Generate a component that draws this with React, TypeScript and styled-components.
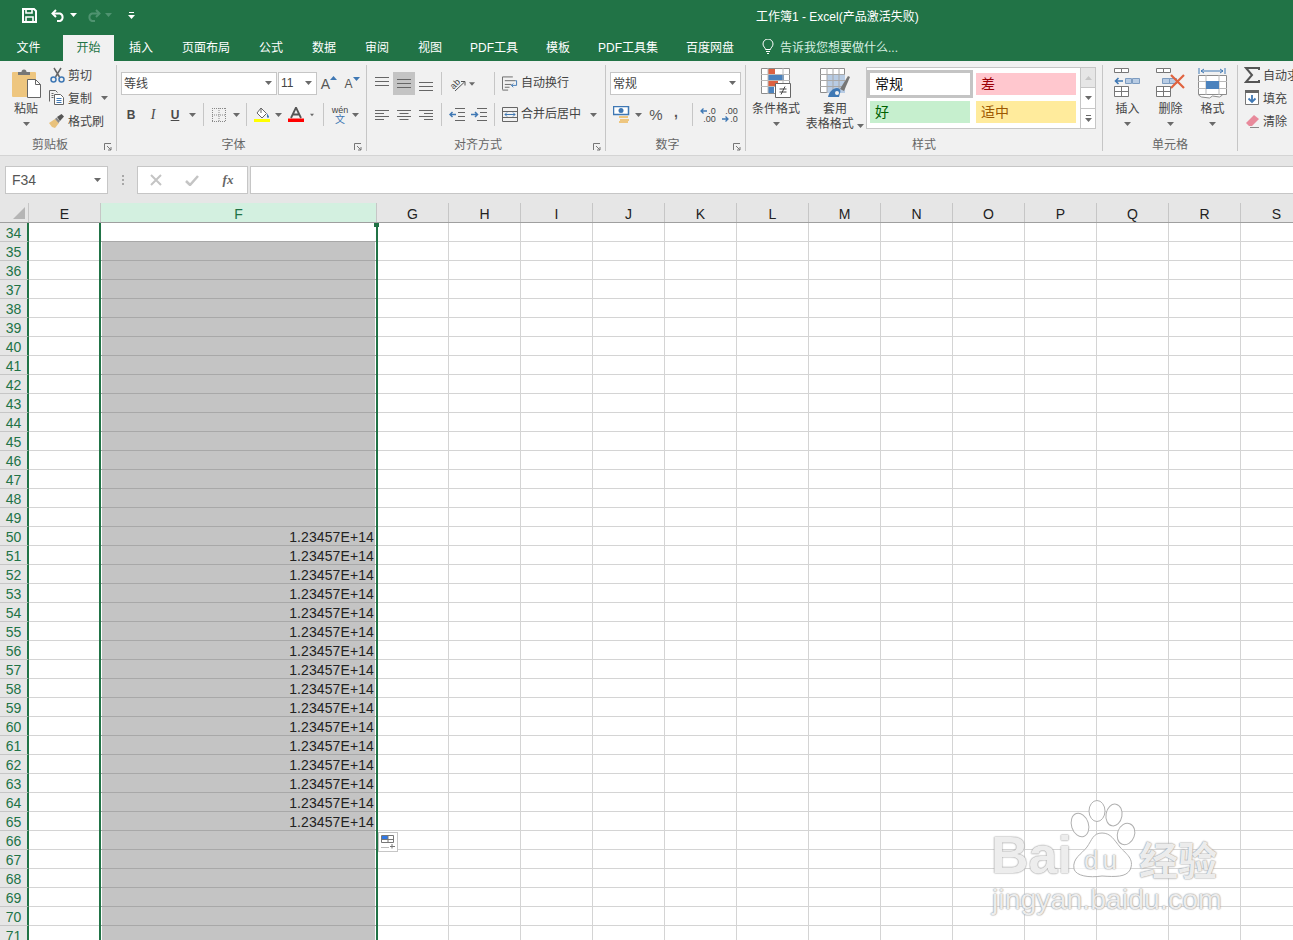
import React from "react";
import styled, { createGlobalStyle } from "styled-components";

const CJK = `"Liberation Sans", "Noto Sans CJK SC", sans-serif`;

const Global = createGlobalStyle`
  html, body { margin: 0; padding: 0; height: 940px; overflow: hidden; background: #fff; }
  body { font-family: ${CJK}; font-size: 12px; color: #444; }
  #root { width: 1293px; height: 940px; overflow: hidden; }
`;

const Page = styled.div`
  width: 1293px;
  height: 940px;
  display: flex;
  flex-direction: column;
  overflow: hidden;
`;

/* ---------- title bar and tabs ---------- */
const TitleBar = styled.div`
  height: 34px;
  flex: none;
  box-sizing: border-box;
  padding-bottom: 4px;
  display: flex;
  align-items: center;
  background: #217346;
  color: #fff;
`;

const Qat = styled.div`
  width: 756px;
  flex: none;
  display: flex;
  align-items: center;
  padding-left: 22px;
  box-sizing: border-box;
`;

const Slot = styled.div<{ $w: number }>`
  width: ${(p) => p.$w}px;
  flex: none;
  display: flex;
  align-items: center;
  justify-content: center;
`;

const Title = styled.div`
  font-size: 12px;
  white-space: nowrap;
`;

const Tabs = styled.div`
  height: 27px;
  flex: none;
  display: flex;
  align-items: flex-end;
  background: #217346;
  padding-left: 2px;
`;

const Tab = styled.div<{ $active?: boolean; $w: number }>`
  width: ${(p) => p.$w}px;
  height: 26px;
  flex: none;
  box-sizing: border-box;
  padding-bottom: 4px;
  display: flex;
  align-items: center;
  justify-content: center;
  font-size: 12px;
  white-space: nowrap;
  color: ${(p) => (p.$active ? "#217346" : "#fff")};
  background: ${(p) => (p.$active ? "#f1f1f1" : "transparent")};
`;

const TellMe = styled.div`
  display: flex;
  align-items: center;
  gap: 6px;
  height: 26px;
  box-sizing: border-box;
  padding-bottom: 4px;
  margin-left: 14px;
  color: #d8efe2;
  font-size: 12px;
  white-space: nowrap;
`;

/* ---------- ribbon ---------- */
const Ribbon = styled.div`
  height: 95px;
  flex: none;
  display: flex;
  box-sizing: border-box;
  background: #f1f1f1;
  border-bottom: 1px solid #d4d4d4;
  overflow: hidden;
`;

const Group = styled.div<{ $w: number; $last?: boolean }>`
  width: ${(p) => p.$w}px;
  flex: none;
  height: 86px;
  margin-top: 4px;
  box-sizing: border-box;
  display: flex;
  flex-direction: column;
  border-right: ${(p) => (p.$last ? "none" : "1px solid #c6c6c6")};
`;

const GroupBody = styled.div<{ $pl?: number }>`
  height: 70px;
  flex: none;
  display: flex;
  padding-left: ${(p) => p.$pl ?? 0}px;
  white-space: nowrap;
`;

const GroupFoot = styled.div`
  height: 16px;
  display: flex;
  align-items: center;
  color: #666;
  font-size: 12px;
`;

const GroupName = styled.div`
  flex: 1;
  text-align: center;
`;

const LauncherBox = styled.div`
  width: 16px;
  flex: none;
  display: flex;
  justify-content: center;
  align-self: flex-end;
`;

const SmallCol = styled.div<{ $ml?: number }>`
  display: flex;
  flex-direction: column;
  margin-top: -2px;
  margin-left: ${(p) => p.$ml ?? 0}px;
`;

const SmallBtn = styled.div`
  height: 23px;
  display: flex;
  align-items: center;
  gap: 3px;
  color: #444;
  font-size: 12px;
`;

const Stack = styled.div`
  display: flex;
  flex-direction: column;
  padding-top: 7px;
  gap: 8px;
  ${SmallBtn} {
    line-height: 21px;
    height: 23px;
  }
`;

const Row = styled.div`
  height: 23px;
  display: flex;
  align-items: center;
`;

const IconBox = styled.div`
  width: 16px;
  height: 16px;
  flex: none;
  display: flex;
  align-items: center;
  justify-content: center;
`;

const Large = styled.div<{ $w: number }>`
  width: ${(p) => p.$w}px;
  flex: none;
  display: flex;
  flex-direction: column;
  align-items: center;
  padding-top: 3px;
  font-size: 12px;
  line-height: 15px;
  color: #444;
`;

const LargeIcon = styled.div`
  height: 30px;
  margin-bottom: 4px;
  display: flex;
  align-items: flex-start;
`;

const LargeCaret = styled.div`
  height: 13px;
  display: flex;
  align-items: center;
`;

const Combo = styled.div<{ $w: number }>`
  width: ${(p) => p.$w}px;
  height: 23px;
  flex: none;
  box-sizing: border-box;
  display: flex;
  align-items: center;
  justify-content: space-between;
  padding: 0 4px 2px 2px;
  background: #fff;
  border: 1px solid #c6c6c6;
  font-size: 12px;
  color: #444;
`;

const Sep = styled.div`
  width: 1px;
  height: 23px;
  background: #c6c6c6;
`;

const FaceBtn = styled.span<{ $kind: "b" | "i" | "u" }>`
  font-family: ${(p) => (p.$kind === "i" ? `"Liberation Serif", serif` : `"Liberation Sans", sans-serif`)};
  font-weight: ${(p) => (p.$kind === "i" ? 400 : 700)};
  font-style: ${(p) => (p.$kind === "i" ? "italic" : "normal")};
  text-decoration: ${(p) => (p.$kind === "u" ? "underline" : "none")};
  font-size: ${(p) => (p.$kind === "i" ? 14 : 12)}px;
  color: #4a4a4a;
`;

const ActiveCell = styled.div`
  width: 22px;
  height: 23px;
  display: flex;
  align-items: center;
  justify-content: center;
  background: #c4c4c4;
`;

const GrowA = styled.span<{ $small?: boolean }>`
  font-family: "Liberation Sans", sans-serif;
  font-size: ${(p) => (p.$small ? 12 : 14)}px;
  color: #555;
  display: flex;
  align-items: flex-start;
`;

const Wen = styled.div`
  display: flex;
  flex-direction: column;
  align-items: center;
  line-height: 9px;
  font-size: 9px;
  color: #444;
  span + span {
    color: #3f78b4;
    font-size: 10px;
  }
`;

const Pct = styled.span<{ $comma?: boolean }>`
  font-family: "Liberation Sans", sans-serif;
  font-size: ${(p) => (p.$comma ? 14 : 15)}px;
  font-weight: ${(p) => (p.$comma ? 700 : 400)};
  color: #555;
  margin-top: ${(p) => (p.$comma ? -5 : 0)}px;
`;

const Decimal = styled.div`
  display: flex;
  flex-direction: column;
  align-items: flex-end;
  font-family: "Liberation Sans", sans-serif;
  font-size: 9px;
  line-height: 8px;
  color: #444;
`;

const DecimalLine = styled.div`
  display: flex;
  align-items: center;
  gap: 1px;
`;

const Gallery = styled.div`
  width: 230px;
  height: 62px;
  margin: 2px 0 0 2px;
  box-sizing: border-box;
  display: flex;
  background: #fff;
  border: 1px solid #c6c6c6;
`;

const StyleGrid = styled.div`
  width: 214px;
  display: grid;
  grid-template-columns: 106px 100px;
  grid-template-rows: 30px 22px;
  column-gap: 3px;
  row-gap: 3px;
`;

const StyleCell = styled.div<{ $bg: string; $fg: string; $m: string; $picked?: boolean }>`
  display: flex;
  align-items: center;
  box-sizing: border-box;
  font-size: 14px;
  padding: 0 0 3px 5px;
  color: ${(p) => p.$fg};
  background: ${(p) => p.$bg};
  border: ${(p) => (p.$picked ? "3px solid #c4c4c4" : "none")};
  margin: ${(p) => p.$m};
`;

const GalleryScroll = styled.div`
  width: 14px;
  display: flex;
  flex-direction: column;
  border-left: 1px solid #c6c6c6;
`;

const ScrollBtn = styled.div<{ $off?: boolean }>`
  flex: 1;
  display: flex;
  align-items: center;
  justify-content: center;
  background: ${(p) => (p.$off ? "#e6e6e6" : "#fff")};
  & + & {
    border-top: 1px solid #c6c6c6;
  }
`;

/* ---------- formula bar ---------- */
const FormulaBar = styled.div`
  height: 47px;
  flex: none;
  box-sizing: border-box;
  display: flex;
  padding: 10px 0 0 5px;
  background: #e6e6e6;
`;

const NameBox = styled.div`
  width: 103px;
  height: 28px;
  box-sizing: border-box;
  display: flex;
  align-items: center;
  justify-content: space-between;
  padding: 0 6px 0 6px;
  background: #fff;
  border: 1px solid #c6c6c6;
  font-size: 14px;
  color: #555;
`;

const Grip = styled.div`
  width: 29px;
  height: 28px;
  flex: none;
  display: flex;
  align-items: center;
  justify-content: center;
`;

const FxBox = styled.div`
  width: 111px;
  height: 28px;
  flex: none;
  box-sizing: border-box;
  display: flex;
  align-items: center;
  background: #fff;
  border: 1px solid #c6c6c6;
`;

const FxText = styled.span`
  font-family: "Liberation Serif", serif;
  font-style: italic;
  font-weight: 700;
  font-size: 13px;
  color: #666;
`;

const FormulaInput = styled.div`
  flex: 1;
  height: 28px;
  margin-left: 2px;
  box-sizing: border-box;
  background: #fff;
  border: 1px solid #c6c6c6;
  border-right: none;
`;

/* ---------- sheet ---------- */
const Sheet = styled.div`
  position: relative;
  flex: 1;
  overflow: hidden;
  background: #fff;
`;

const HeadRow = styled.div`
  height: 20px;
  box-sizing: border-box;
  display: flex;
  background: #e6e6e6;
  border-bottom: 1px solid #9f9f9f;
`;

const Corner = styled.div`
  width: 29px;
  flex: none;
  display: flex;
  align-items: flex-end;
  justify-content: flex-end;
  padding: 0 3px 3px 0;
  box-sizing: border-box;
  border-right: 1px solid #c6c6c6;
`;

const ColHead = styled.div<{ $w: number; $on?: boolean }>`
  width: ${(p) => p.$w}px;
  flex: none;
  box-sizing: border-box;
  text-align: center;
  font-size: 14px;
  line-height: 23px;
  color: ${(p) => (p.$on ? "#217346" : "#222")};
  background: ${(p) => (p.$on ? "#d3f0e0" : "transparent")};
  border-right: 1px solid #c6c6c6;
`;

const SheetRow = styled.div`
  height: 19px;
  display: flex;
`;

const RowHead = styled.div`
  width: 29px;
  flex: none;
  box-sizing: border-box;
  text-align: center;
  font-size: 14px;
  line-height: 20px;
  color: #217346;
  background: #e6e6e6;
  border-right: 2px solid #217346;
  border-bottom: 1px solid #c6c6c6;
`;

const Cell = styled.div<{ $w: number }>`
  width: ${(p) => p.$w}px;
  flex: none;
  box-sizing: border-box;
  border-right: 1px solid #d4d4d4;
  border-bottom: 1px solid #d4d4d4;
`;

const FilledCell = styled.div<{ $fill: boolean }>`
  width: 276px;
  flex: none;
  box-sizing: border-box;
  padding: 0 2px 0 1px;
  background: ${(p) => (p.$fill ? "#c4c4c4" : "#fff")};
  background-clip: content-box;
  border-bottom: 1px solid #a8a8a8;
  color: #222;
`;

const CellValue = styled.div`
  text-align: right;
  padding-right: 1px;
  font-family: "Liberation Sans", sans-serif;
  font-size: 14px;
  letter-spacing: 0.1px;
  line-height: 21px;
`;

const SelectionEdge = styled.div<{ $side: "left" | "right" }>`
  position: absolute;
  top: ${(p) => (p.$side === "left" ? 20 : 24)}px;
  bottom: 0;
  width: 2px;
  left: ${(p) => (p.$side === "left" ? 99 : 376)}px;
  background: #217346;
`;

const Handle = styled.div`
  position: absolute;
  left: 374px;
  top: 20px;
  width: 5px;
  height: 4px;
  background: #217346;
`;

const SmartTag = styled.div`
  position: absolute;
  left: 378px;
  top: 629px;
  width: 20px;
  height: 20px;
  box-sizing: border-box;
  display: flex;
  align-items: center;
  justify-content: center;
  background: #fff;
  border: 1px solid #c6c6c6;
`;

const Watermark = styled.div`
  position: absolute;
  left: 991px;
  top: 597px;
  width: 240px;
  display: flex;
  flex-direction: column;
  pointer-events: none;
  color: rgba(255, 255, 255, 0.82);
  text-shadow: 0 0 1.5px #9a9a9a, 0 0 1.5px #9a9a9a;
`;

const MarkTop = styled.div`
  display: flex;
  align-items: flex-end;
  height: 78px;
`;

const MarkBai = styled.span`
  font-family: "Liberation Sans", sans-serif;
  font-weight: 700;
  font-size: 52px;
  line-height: 52px;
  width: 78px;
  margin-bottom: -3px;
`;

const Paw = styled.div`
  position: relative;
  width: 70px;
  height: 78px;
  flex: none;
`;

const PawSvg = styled.svg`
  position: absolute;
  left: 0;
  top: 0;
  filter: blur(0.5px);
`;

const MarkDu = styled.span`
  position: absolute;
  left: 15px;
  top: 46px;
  font-family: "Liberation Sans", sans-serif;
  font-size: 26px;
  letter-spacing: 4px;
  line-height: 28px;
`;

const MarkCn = styled.span`
  font-family: "Noto Sans CJK SC", sans-serif;
  font-weight: 700;
  font-size: 39px;
  line-height: 40px;
`;

const MarkUrl = styled.div`
  font-family: "Liberation Sans", sans-serif;
  font-size: 28.5px;
  line-height: 32px;
  margin-top: 5px;
  margin-left: 1px;
`;

/* ---------- drawings ---------- */
const Caret = ({ c = "#6a6a6a", up }: { c?: string; up?: boolean }) => (
  <svg width="7" height="4" viewBox="0 0 7 4"><path d={up ? "M0 4h7L3.5 0z" : "M0 0h7L3.5 4z"} fill={c} /></svg>
);

const Launcher = () => (
  <svg width="8" height="8" viewBox="0 0 8 8" fill="none" stroke="#777">
    <path d="M.5 7V.5H7" /><path d="M3 3l4 4M7 4v3H4" />
  </svg>
);

const Save = () => (
  <svg width="15" height="15" viewBox="0 0 15 15" fill="none" stroke="#fff" strokeWidth="2">
    <path d="M1 1h11l2 2v11H1z" /><path d="M4 1v4h6V1M4 14V9h7v5" strokeWidth="1.6" />
  </svg>
);

const Undo = ({ c }: { c: string }) => (
  <svg width="15" height="13" viewBox="0 0 15 13" fill="none" stroke={c} strokeWidth="2">
    <path d="M5 1L1.5 4.5 5 8" /><path d="M2 4.5h7a4 4 0 0 1 0 7.5H6" />
  </svg>
);

const Redo = ({ c }: { c: string }) => (
  <svg width="15" height="13" viewBox="0 0 15 13" fill="none" stroke={c} strokeWidth="2">
    <path d="M10 1l3.5 3.5L10 8" /><path d="M13 4.5H6a4 4 0 0 0 0 7.5h3" />
  </svg>
);

const Customize = ({ c = "#fff" }: { c?: string }) => (
  <svg width="7" height="7" viewBox="0 0 7 7" fill={c}><path d="M1 0h5v1H1zM0 3h7L3.5 7z" /></svg>
);

const Bulb = () => (
  <svg width="12" height="15" viewBox="0 0 12 15" fill="none" stroke="#fff">
    <path d="M3.5 10.5C3.5 8.5 1 8 1 5a5 5 0 0 1 10 0c0 3-2.5 3.5-2.5 5.5z" /><path d="M4 12.5h4M5 14.5h2" />
  </svg>
);

const PasteIcon = () => (
  <svg width="29" height="30" viewBox="0 0 29 30">
    <path d="M1 4h22a1 1 0 0 1 1 1v24H1a1 1 0 0 1-1-1V5a1 1 0 0 1 1-1z" fill="#eec67f" />
    <path d="M6 7V4h3.5a2.5 2.5 0 0 1 5 0H18v3z" fill="#777" />
    <path d="M15.5 11.5h8l5 5v13h-13z" fill="#fff" stroke="#666" />
    <path d="M23.5 11.5v5h5" fill="none" stroke="#666" />
  </svg>
);

const Scissors = () => (
  <svg width="15" height="16" viewBox="0 0 15 16" fill="none">
    <path d="M4 1l5.5 9M11 1L5.5 10" stroke="#666" strokeWidth="1.5" />
    <circle cx="3.5" cy="12.5" r="2.5" stroke="#3f78b4" strokeWidth="1.5" />
    <circle cx="11.5" cy="12.5" r="2.5" stroke="#3f78b4" strokeWidth="1.5" />
  </svg>
);

const CopyIcon = () => (
  <svg width="16" height="15" viewBox="0 0 16 15" fill="none">
    <path d="M.5 11.5V.5h6l2 2" stroke="#666" />
    <path d="M5.5 4.5h6l3 3v7h-9z" fill="#fff" stroke="#666" />
    <path d="M7.5 8.5h5M7.5 10.5h5M7.5 12.5h5" stroke="#3f78b4" />
    <path d="M2.5 3.5h2M2.5 5.5h2M2.5 7.5h2" stroke="#666" />
  </svg>
);

const Brush = () => (
  <svg width="16" height="14" viewBox="0 0 16 14">
    <path d="M0 9l6-4 4 4-4 5-3-1z" fill="#e9c27c" />
    <path d="M6 5l1.5-1.5 3.5 3.5L9.5 9z" fill="#888" />
    <path d="M8 3l4.5-3L15 2.5 11 7z" fill="#555" />
  </svg>
);

const BordersIcon = () => (
  <svg width="14" height="14" viewBox="0 0 14 14" fill="none" stroke="#888" strokeDasharray="1 1">
    <path d="M.5 0v14M7 0v14M13.5 0v14M0 .5h14M0 7h14M0 13.5h14" />
  </svg>
);

const FillIcon = () => (
  <svg width="16" height="15" viewBox="0 0 16 15">
    <path d="M7 1l5.5 5.5L8 11 3 6z" fill="#fff" stroke="#666" />
    <path d="M7 1v5" stroke="#666" />
    <path d="M13 6.5s2 2.5 2 3.5-2 1-2 0 0-3.5 0-3.5z" fill="#3f78b4" />
    <path d="M0 12h16v3H0z" fill="#ffff00" />
  </svg>
);

const FontColorIcon = () => (
  <svg width="16" height="15" viewBox="0 0 16 15">
    <path d="M3 11L8 .5 13 11M5 7.5h6" fill="none" stroke="#555" strokeWidth="1.8" />
    <path d="M0 11.5h16V15H0z" fill="#ff0000" />
  </svg>
);

const Lines = ({ rows, h = 14 }: { rows: number[]; h?: number }) => (
  <svg width="14" height={h} viewBox={`0 0 14 ${h}`} fill="none" stroke="#666">
    {rows.map((y) => (<path key={y} d={`M0 ${y}.5h14`} />))}
  </svg>
);

const AlignLeft = () => (
  <svg width="14" height="10" viewBox="0 0 14 10" stroke="#666"><path d="M0 .5h14M0 3.5h9M0 6.5h14M0 9.5h9" /></svg>
);
const AlignCenter = () => (
  <svg width="14" height="10" viewBox="0 0 14 10" stroke="#666"><path d="M0 .5h14M2.5 3.5h9M0 6.5h14M2.5 9.5h9" /></svg>
);
const AlignRight = () => (
  <svg width="14" height="10" viewBox="0 0 14 10" stroke="#666"><path d="M0 .5h14M5 3.5h9M0 6.5h14M5 9.5h9" /></svg>
);

const Orient = () => (
  <svg width="17" height="16" viewBox="0 0 17 16" fill="none" overflow="visible">
    <text x="1" y="11" transform="rotate(-45 6 8)" fontFamily="Liberation Sans" fontSize="9" fill="#444">ab</text>
    <path d="M6 15L15.5 6" stroke="#555" />
    <path d="M12 5.5h4v4" stroke="#555" />
  </svg>
);

const Outdent = () => (
  <svg width="16" height="14" viewBox="0 0 16 14" fill="none">
    <path d="M6 .5h10M9 4.5h7M9 8.5h7M6 12.5h10" stroke="#666" />
    <path d="M7 6.5H1M3.5 4L1 6.5 3.5 9" stroke="#3f78b4" strokeWidth="1.5" />
  </svg>
);

const Indent = () => (
  <svg width="16" height="14" viewBox="0 0 16 14" fill="none">
    <path d="M6 .5h10M9 4.5h7M9 8.5h7M6 12.5h10" stroke="#666" />
    <path d="M0 6.5h6M4 4l2.5 2.5L4 9" stroke="#3f78b4" strokeWidth="1.5" />
  </svg>
);

const WrapIcon = () => (
  <svg width="17" height="15" viewBox="0 0 17 15" fill="none">
    <path d="M.5 14V.5h11M.5 14.5h6" stroke="#666" />
    <path d="M3 4.5h11M3 8.5h7M3 11.5h5" stroke="#666" />
    <path d="M14 4.5h1.5v5H10M12 7.5l-2 2 2 2" stroke="#3f78b4" />
  </svg>
);

const MergeIcon = () => (
  <svg width="16" height="15" viewBox="0 0 16 15" fill="none">
    <path d="M.5.5h15v14H.5zM.5 4.5h15M.5 10.5h15" stroke="#666" />
    <path d="M3 7.5h10M5 5.5l-2 2 2 2M11 5.5l2 2-2 2" stroke="#3f78b4" />
  </svg>
);

const Currency = () => (
  <svg width="17" height="17" viewBox="0 0 17 17">
    <path d="M.5.5h15v8H.5z" fill="#fff" stroke="#3f78b4" strokeWidth="1.5" />
    <circle cx="8" cy="4.5" r="2.5" fill="#3f78b4" />
    <path d="M6 10h9v2H6zM7 13h9v2H7zM6 15h9v2H6z" fill="#eec67f" />
  </svg>
);

const LeftArrow = () => (
  <svg width="7" height="6" viewBox="0 0 7 6" fill="none" stroke="#3f78b4" strokeWidth="1.3"><path d="M7 3H1M3.5.5L1 3l2.5 2.5" /></svg>
);
const RightArrow = () => (
  <svg width="7" height="6" viewBox="0 0 7 6" fill="none" stroke="#3f78b4" strokeWidth="1.3"><path d="M0 3h6M3.5.5L6 3 3.5 5.5" /></svg>
);

const CondFormat = () => (
  <svg width="30" height="30" viewBox="0 0 30 30">
    <path d="M.5.5h28v25H.5z" fill="#fff" stroke="#8c8c8c" />
    <path d="M7 1h7v5H7zM7 13h10v5H7z" fill="#dc6141" />
    <path d="M7 7h16v5H7zM7 19h6v6H7z" fill="#4b82bd" />
    <path d="M7 0v26M22 0v26M0 6.5h29M0 12.5h29M0 18.5h29" stroke="#b9b9b9" fill="none" />
    <path d="M14.5 15.5h15v14h-15z" fill="#fff" stroke="#666" />
    <path d="M18.5 21h7M18.5 24h7M24 18.5L20 26.5" stroke="#444" fill="none" />
  </svg>
);

const TableFormat = () => (
  <svg width="30" height="30" viewBox="0 0 30 30">
    <path d="M.5.5h24v24H.5z" fill="#fff" stroke="#8c8c8c" />
    <path d="M7 7h18v18H7z" fill="#b8cce4" />
    <path d="M7 0v25M13 0v25M19 0v25M0 6.5h25M0 12.5h25M0 18.5h25" stroke="#a8a8a8" fill="none" />
    <path d="M20 21l8-13 2 1-6 14z" fill="#777" />
    <path d="M8 29c1-5 5-9 9-9 3 0 4 3 3 5l-1 4z" fill="#3f78b4" />
    <circle cx="17" cy="25" r="2" fill="#f1f1f1" />
  </svg>
);

const Mini = ({ x, y }: { x: number; y: number }) => (
  <path d={`M${x}.5 ${y}.5h7v4h-7zM${x + 7}.5 ${y}.5h7v4h-7z`} fill="#fff" stroke="#777" />
);

const MiniGrid = ({ x, y }: { x: number; y: number }) => (
  <path d={`M${x}.5 ${y}.5h14v10h-14zM${x + 7}.5 ${y}v10M${x} ${y + 5}.5h14`} fill="#fff" stroke="#777" />
);

const InsertIcon = () => (
  <svg width="28" height="29" viewBox="0 0 28 29">
    <Mini x={0} y={0} />
    <path d="M11.5 10.5h6v5h-6zM18.5 10.5h7v5h-7z" fill="#b8cce4" stroke="#7d9cc0" />
    <path d="M9 13H2M4.5 10L1.5 13l3 3" fill="none" stroke="#3f78b4" strokeWidth="1.6" />
    <MiniGrid x={0} y={18} />
  </svg>
);

const DeleteIcon = () => (
  <svg width="30" height="29" viewBox="0 0 30 29">
    <Mini x={0} y={0} />
    <path d="M6.5 10.5h7v5h-7zM13.5 10.5h7v5h-7z" fill="#b8cce4" stroke="#7d9cc0" />
    <path d="M15 7l13 13M28 7L15 20" stroke="#e0633f" strokeWidth="2.2" fill="none" />
    <MiniGrid x={0} y={18} />
  </svg>
);

const FormatIcon = () => (
  <svg width="29" height="31" viewBox="0 0 29 31">
    <path d="M1 0v6M27 0v6" stroke="#3f78b4" fill="none" />
    <path d="M3 3h22M6 1L3 3l3 2M22 1l3 2-3 2" stroke="#3f78b4" fill="none" />
    <path d="M.5 7.5h28v19h-28z" fill="#fff" stroke="#8c8c8c" />
    <path d="M8 7v20M21 7v20M0 13.5h29M0 20.5h29" stroke="#b9b9b9" fill="none" />
    <path d="M8 13h13v8H8z" fill="#4b82bd" />
    <path d="M.5 27l3 2 8 1 3-2 7 1 3-2" stroke="#8c8c8c" fill="#fff" />
  </svg>
);

const SigmaIcon = () => (
  <svg width="16" height="16" viewBox="0 0 16 16" fill="none" stroke="#555" strokeWidth="2"><path d="M15 3V1H2l6 7-6 7h13v-2" /></svg>
);

const FillDown = () => (
  <svg width="14" height="15" viewBox="0 0 14 15">
    <path d="M.5.5h13v14H.5z" fill="#fff" stroke="#777" />
    <path d="M0 0h14v3H0z" fill="#666" />
    <path d="M7 5v7M3.5 8.5L7 12l3.5-3.5" fill="none" stroke="#3f78b4" strokeWidth="1.8" />
  </svg>
);

const Eraser = () => (
  <svg width="15" height="14" viewBox="0 0 15 14">
    <path d="M1 9l8-8 5 4-7 7H4z" fill="#e88a9b" />
    <path d="M5 13.5h9" stroke="#888" />
  </svg>
);

const TagIcon = () => (
  <svg width="14" height="14" viewBox="0 0 14 14" fill="none">
    <path d="M.5.5h12v7H.5z" stroke="#777" />
    <path d="M1 1h6v3H1z" fill="#2f78e6" />
    <path d="M7 1v6M1 4.5h11" stroke="#777" />
    <path d="M.5 12.5h7" stroke="#777" strokeDasharray="1 1" />
    <path d="M11 9v4.5M9 11.5h5" stroke="#777" />
  </svg>
);

const PawPad = () => (
  <PawSvg width="70" height="81" viewBox="0 0 70 81" fill="none" stroke="#b0b0b0" strokeWidth="1">
    <g fill="rgba(255,255,255,.7)">
      <ellipse cx="11" cy="25" rx="8.5" ry="12" transform="rotate(-18 11 25)" />
      <ellipse cx="28" cy="11" rx="8" ry="10.5" />
      <ellipse cx="45" cy="15" rx="8" ry="11" transform="rotate(10 45 15)" />
      <ellipse cx="57" cy="34" rx="8.5" ry="11" transform="rotate(20 57 34)" />
      <path d="M33 33c9 0 12 7 18 14s15 12 10 23c-4 7-14 7-28 6-13 2-26 0-28-7-2-11 8-15 13-22s6-14 15-14z" />
    </g>
  </PawSvg>
);

/* ---------- data ---------- */
const tabs: [string, number, boolean?][] = [
  ["文件", 53],
  ["", 8],
  ["开始", 51, true],
  ["插入", 54],
  ["页面布局", 76],
  ["公式", 54],
  ["数据", 52],
  ["审阅", 54],
  ["视图", 52],
  ["PDF工具", 76],
  ["模板", 52],
  ["PDF工具集", 88],
  ["百度网盘", 76],
];

const columns = ["G", "H", "I", "J", "K", "L", "M", "N", "O", "P", "Q", "R", "S"];
const rows = Array.from({ length: 38 }, (_, i) => 34 + i);

export default function App() {
  return (
    <Page>
      <Global />
      <TitleBar>
        <Qat>
          <Slot $w={15}><Save /></Slot>
          <Slot $w={14} />
          <Slot $w={15}><Undo c="#fff" /></Slot>
          <Slot $w={14}><Caret c="#fff" /></Slot>
          <Slot $w={6} />
          <Slot $w={15}><Redo c="#4f9370" /></Slot>
          <Slot $w={14}><Caret c="#4f9370" /></Slot>
          <Slot $w={13} />
          <Slot $w={7}><Customize /></Slot>
        </Qat>
        <Title>工作簿1 - Excel(产品激活失败)</Title>
      </TitleBar>

      <Tabs>
        {tabs.map(([name, w, on], i) => (
          <Tab key={i} $w={w} $active={on}>{name}</Tab>
        ))}
        <TellMe><Bulb />告诉我您想要做什么...</TellMe>
      </Tabs>

      <Ribbon>
        <Group $w={117}>
          <GroupBody $pl={10}>
            <Large $w={32}>
              <LargeIcon><PasteIcon /></LargeIcon>
              粘贴
              <LargeCaret><Caret /></LargeCaret>
            </Large>
            <SmallCol $ml={7}>
              <SmallBtn><IconBox><Scissors /></IconBox>剪切</SmallBtn>
              <SmallBtn><IconBox><CopyIcon /></IconBox>复制<Slot $w={18}><Caret /></Slot></SmallBtn>
              <SmallBtn><IconBox><Brush /></IconBox>格式刷</SmallBtn>
            </SmallCol>
          </GroupBody>
          <GroupFoot>
            <GroupName>剪贴板</GroupName>
            <LauncherBox><Launcher /></LauncherBox>
          </GroupFoot>
        </Group>

        <Group $w={250}>
          <GroupBody $pl={3}>
            <Stack>
              <Row>
                <Slot $w={1} />
                <Combo $w={156}>等线<Caret /></Combo>
                <Slot $w={1} />
                <Combo $w={39}>11<Caret /></Combo>
                <Slot $w={4} />
                <Slot $w={16}><GrowA>A<Caret c="#3f78b4" up /></GrowA></Slot>
                <Slot $w={7} />
                <Slot $w={16}><GrowA $small>A<Caret c="#3f78b4" /></GrowA></Slot>
              </Row>
              <Row>
                <Slot $w={22}><FaceBtn $kind="b">B</FaceBtn></Slot>
                <Slot $w={22}><FaceBtn $kind="i">I</FaceBtn></Slot>
                <Slot $w={22}><FaceBtn $kind="u">U</FaceBtn></Slot>
                <Slot $w={12}><Caret /></Slot>
                <Slot $w={10}><Sep /></Slot>
                <Slot $w={21}><BordersIcon /></Slot>
                <Slot $w={14}><Caret /></Slot>
                <Slot $w={7}><Sep /></Slot>
                <Slot $w={24}><FillIcon /></Slot>
                <Slot $w={8}><Caret /></Slot>
                <Slot $w={28}><FontColorIcon /></Slot>
                <Slot $w={4}><Caret /></Slot>
                <Slot $w={18}><Sep /></Slot>
                <Slot $w={16}><Wen><span>wén</span><span>文</span></Wen></Slot>
                <Slot $w={14}><Caret /></Slot>
              </Row>
            </Stack>
          </GroupBody>
          <GroupFoot>
            <GroupName>字体</GroupName>
            <LauncherBox><Launcher /></LauncherBox>
          </GroupFoot>
        </Group>

        <Group $w={239}>
          <GroupBody $pl={4}>
            <Stack>
              <Row>
                <Slot $w={22}><Lines rows={[0, 4, 8]} /></Slot>
                <ActiveCell><Lines rows={[2, 6, 10]} /></ActiveCell>
                <Slot $w={22}><Lines rows={[5, 9, 13]} /></Slot>
                <Slot $w={8}><Sep /></Slot>
                <Slot $w={24}><Orient /></Slot>
                <Slot $w={6}><Caret /></Slot>
                <Slot $w={19} />
                <Sep />
                <Slot $w={7} />
                <SmallBtn><IconBox><WrapIcon /></IconBox>自动换行</SmallBtn>
              </Row>
              <Row>
                <Slot $w={22}><AlignLeft /></Slot>
                <Slot $w={22}><AlignCenter /></Slot>
                <Slot $w={22}><AlignRight /></Slot>
                <Slot $w={8}><Sep /></Slot>
                <Slot $w={24}><Outdent /></Slot>
                <Slot $w={20}><Indent /></Slot>
                <Slot $w={5} />
                <Sep />
                <Slot $w={7} />
                <SmallBtn><IconBox><MergeIcon /></IconBox>合并后居中<Slot $w={18}><Caret /></Slot></SmallBtn>
              </Row>
            </Stack>
          </GroupBody>
          <GroupFoot>
            <GroupName>对齐方式</GroupName>
            <LauncherBox><Launcher /></LauncherBox>
          </GroupFoot>
        </Group>

        <Group $w={140}>
          <GroupBody $pl={4}>
            <Stack>
              <Row><Combo $w={131}>常规<Caret /></Combo></Row>
              <Row>
                <Slot $w={22}><Currency /></Slot>
                <Slot $w={12}><Caret /></Slot>
                <Slot $w={24}><Pct>%</Pct></Slot>
                <Slot $w={16}><Pct $comma>,</Pct></Slot>
                <Slot $w={16}><Sep /></Slot>
                <Slot $w={16}>
                  <Decimal>
                    <DecimalLine><LeftArrow /><span>.0</span></DecimalLine>
                    <DecimalLine><span>.00</span></DecimalLine>
                  </Decimal>
                </Slot>
                <Slot $w={28}>
                  <Decimal>
                    <DecimalLine><span>.00</span></DecimalLine>
                    <DecimalLine><RightArrow /><span>.0</span></DecimalLine>
                  </Decimal>
                </Slot>
              </Row>
            </Stack>
          </GroupBody>
          <GroupFoot>
            <GroupName>数字</GroupName>
            <LauncherBox><Launcher /></LauncherBox>
          </GroupFoot>
        </Group>

        <Group $w={357}>
          <GroupBody>
            <Large $w={60}>
              <LargeIcon><CondFormat /></LargeIcon>
              条件格式
              <LargeCaret><Caret /></LargeCaret>
            </Large>
            <Large $w={58}>
              <LargeIcon><TableFormat /></LargeIcon>
              套用
              <span>表格格式 <Caret /></span>
            </Large>
            <Gallery>
              <StyleGrid>
                <StyleCell $bg="#fff" $fg="#111" $m="2px 0 0" $picked>常规</StyleCell>
                <StyleCell $bg="#ffc7ce" $fg="#9c0006" $m="5px 0 3px">差</StyleCell>
                <StyleCell $bg="#c6efce" $fg="#006100" $m="0 3px">好</StyleCell>
                <StyleCell $bg="#ffeb9c" $fg="#9c5700" $m="0">适中</StyleCell>
              </StyleGrid>
              <GalleryScroll>
                <ScrollBtn $off><Caret c="#c6c6c6" up /></ScrollBtn>
                <ScrollBtn><Caret /></ScrollBtn>
                <ScrollBtn><Customize c="#6a6a6a" /></ScrollBtn>
              </GalleryScroll>
            </Gallery>
          </GroupBody>
          <GroupFoot><GroupName>样式</GroupName></GroupFoot>
        </Group>

        <Group $w={135}>
          <GroupBody $pl={3}>
            <Large $w={43}>
              <LargeIcon><InsertIcon /></LargeIcon>
              插入
              <LargeCaret><Caret /></LargeCaret>
            </Large>
            <Large $w={43}>
              <LargeIcon><DeleteIcon /></LargeIcon>
              删除
              <LargeCaret><Caret /></LargeCaret>
            </Large>
            <Large $w={41}>
              <LargeIcon><FormatIcon /></LargeIcon>
              格式
              <LargeCaret><Caret /></LargeCaret>
            </Large>
          </GroupBody>
          <GroupFoot><GroupName>单元格</GroupName></GroupFoot>
        </Group>

        <Group $w={60} $last>
          <GroupBody $pl={6}>
            <SmallCol>
              <SmallBtn><IconBox><SigmaIcon /></IconBox>自动求和</SmallBtn>
              <SmallBtn><IconBox><FillDown /></IconBox>填充</SmallBtn>
              <SmallBtn><IconBox><Eraser /></IconBox>清除</SmallBtn>
            </SmallCol>
          </GroupBody>
        </Group>
      </Ribbon>

      <FormulaBar>
        <NameBox>F34<Caret /></NameBox>
        <Grip>
          <svg width="2" height="10" viewBox="0 0 2 10" fill="#a8a8a8"><path d="M0 0h2v2H0zM0 4h2v2H0zM0 8h2v2H0z" /></svg>
        </Grip>
        <FxBox>
          <Slot $w={36}>
            <svg width="12" height="12" viewBox="0 0 12 12" stroke="#c4c4c4" strokeWidth="2"><path d="M1 1l10 10M11 1L1 11" /></svg>
          </Slot>
          <Slot $w={36}>
            <svg width="14" height="11" viewBox="0 0 14 11" fill="none" stroke="#c4c4c4" strokeWidth="2.5"><path d="M1 6l4 4 8-9" /></svg>
          </Slot>
          <Slot $w={36}><FxText>fx</FxText></Slot>
        </FxBox>
        <FormulaInput />
      </FormulaBar>

      <Sheet>
        <HeadRow>
          <Corner>
            <svg width="12" height="12" viewBox="0 0 12 12"><path d="M12 0v12H0z" fill="#b5b5b5" /></svg>
          </Corner>
          <ColHead $w={72}>E</ColHead>
          <ColHead $w={276} $on>F</ColHead>
          {columns.map((c) => (<ColHead key={c} $w={72}>{c}</ColHead>))}
        </HeadRow>

        {rows.map((r) => (
          <SheetRow key={r}>
            <RowHead>{r}</RowHead>
            <Cell $w={72} />
            <FilledCell $fill={r > 34}>
              {r >= 50 && r <= 65 && <CellValue>1.23457E+14</CellValue>}
            </FilledCell>
            {columns.map((c) => (<Cell key={c} $w={72} />))}
          </SheetRow>
        ))}

        <SelectionEdge $side="left" />
        <SelectionEdge $side="right" />
        <Handle />
        <SmartTag><TagIcon /></SmartTag>

        <Watermark>
          <MarkTop>
            <MarkBai>Bai</MarkBai>
            <Paw><PawPad /><MarkDu>du</MarkDu></Paw>
            <MarkCn>经验</MarkCn>
          </MarkTop>
          <MarkUrl>jingyan.baidu.com</MarkUrl>
        </Watermark>
      </Sheet>
    </Page>
  );
}
